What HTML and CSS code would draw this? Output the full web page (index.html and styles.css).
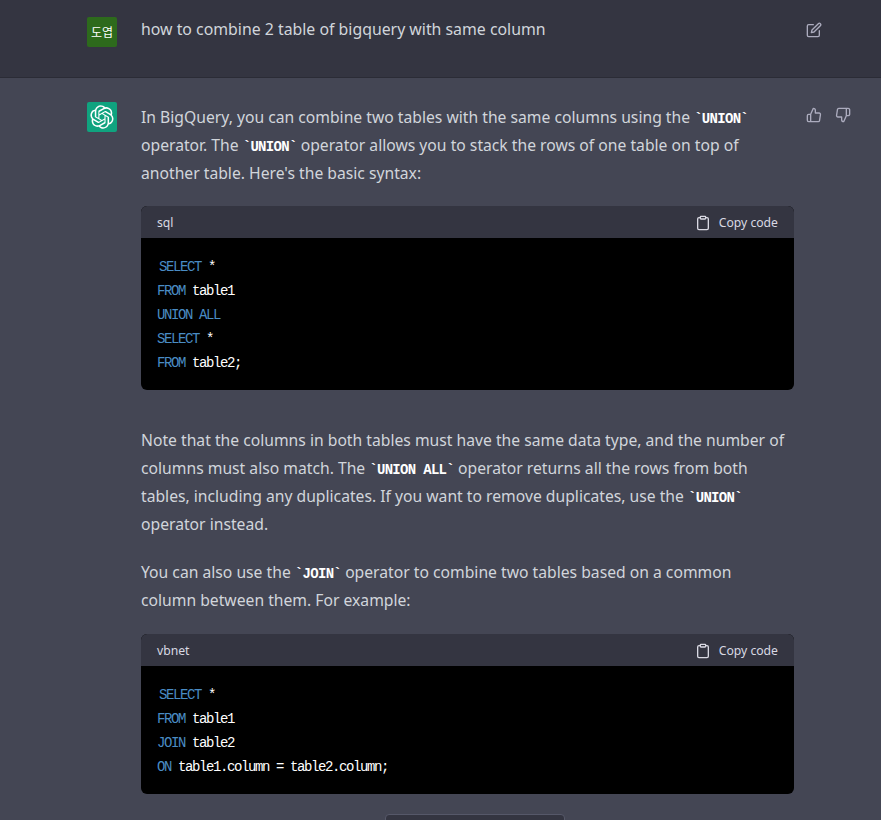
FILE: index.html
```html
<!DOCTYPE html>
<html lang="en">
<head>
    <meta charset="UTF-8">
    <title>ChatGPT</title>
    <link rel="stylesheet" href="styles.css">
</head>
<body>
    <div class="chat">
        <div class="row row-user">
            <div class="avatar avatar-user">도엽</div>
            <div class="message message-user">how to combine 2 table of bigquery with same column</div>
            <div class="actions">
                <svg class="icon" viewBox="0 0 24 24"><path d="M11 4H4a2 2 0 0 0-2 2v14a2 2 0 0 0 2 2h14a2 2 0 0 0 2-2v-7"/><path d="M18.5 2.5a2.121 2.121 0 0 1 3 3L12 15l-4 1 1-4 9.500-9.500z"/></svg>
            </div>
        </div>
        <div class="row row-bot">
            <div class="avatar avatar-bot">
                <svg viewBox="0 0 41 41"><path d="M37.5324 16.8707C37.9808 15.5241 38.1363 14.0974 37.9886 12.6859C37.8409 11.2744 37.3934 9.91076 36.676 8.68622C35.6126 6.83404 33.9882 5.3676 32.0373 4.4985C30.0864 3.62941 27.9098 3.40259 25.8215 3.85078C24.8796 2.7893 23.7219 1.94125 22.4257 1.36341C21.1295 0.785575 19.7249 0.491269 18.3058 0.500197C16.1708 0.495044 14.0893 1.16803 12.3614 2.42214C10.6335 3.67624 9.34853 5.44666 8.6917 7.47815C7.30085 7.76286 5.98686 8.3414 4.8377 9.17505C3.68854 10.0087 2.73073 11.0782 2.02839 12.312C0.956464 14.1591 0.498905 16.2988 0.721698 18.4228C0.944492 20.5467 1.83612 22.5449 3.268 24.1293C2.81966 25.4759 2.66413 26.9026 2.81182 28.3141C2.95951 29.7256 3.40701 31.0892 4.12437 32.3138C5.18791 34.1659 6.8123 35.6322 8.76321 36.5013C10.7141 37.3704 12.8907 37.5973 14.9789 37.1492C15.9208 38.2107 17.0786 39.0587 18.3747 39.6366C19.6709 40.2144 21.0755 40.5087 22.4946 40.4998C24.6307 40.5054 26.7133 39.8321 28.4418 38.5772C30.1704 37.3223 31.4556 35.5506 32.1119 33.5179C33.5027 33.2332 34.8167 32.6547 35.9659 31.821C37.115 30.9874 38.0728 29.9178 38.7752 28.684C39.8458 26.8371 40.3023 24.6979 40.0789 22.5748C39.8556 20.4517 38.9639 18.4544 37.5324 16.8707ZM22.4978 37.8849C20.7443 37.8874 19.0459 37.2733 17.6994 36.1501C17.7601 36.117 17.8666 36.0586 17.936 36.0161L25.9004 31.4156C26.1003 31.3019 26.2663 31.137 26.3813 30.9378C26.4964 30.7386 26.5563 30.5124 26.5549 30.2825V19.0542L29.9213 20.998C29.9389 21.0068 29.9541 21.0198 29.9656 21.0359C29.977 21.052 29.9842 21.0707 29.9867 21.0902V30.3889C29.9842 32.375 29.1946 34.2791 27.7909 35.6841C26.3872 37.0892 24.4838 37.8806 22.4978 37.8849ZM6.39227 31.0064C5.51397 29.4888 5.19742 27.7107 5.49804 25.9832C5.55718 26.0187 5.66048 26.0818 5.73461 26.1244L13.699 30.7248C13.8975 30.8408 14.1233 30.902 14.3532 30.902C14.583 30.902 14.8088 30.8408 15.0073 30.7248L24.731 25.1103V28.9979C24.7321 29.0177 24.7283 29.0376 24.7199 29.0556C24.7115 29.0736 24.6988 29.0893 24.6829 29.1012L16.6317 33.7497C14.9096 34.7416 12.8643 35.0097 10.9447 34.4954C9.02506 33.9811 7.38785 32.7263 6.39227 31.0064ZM4.29707 13.6194C5.17156 12.0998 6.55279 10.9364 8.19885 10.3327C8.19885 10.4013 8.19491 10.5228 8.19491 10.6071V19.808C8.19351 20.0378 8.25334 20.2638 8.36823 20.4629C8.48312 20.6619 8.64893 20.8267 8.84863 20.9404L18.5723 26.5542L15.206 28.4979C15.1894 28.5089 15.1703 28.5155 15.1505 28.5173C15.1307 28.5191 15.1107 28.516 15.0924 28.5082L7.04046 23.8557C5.32135 22.8601 4.06716 21.2235 3.55289 19.3046C3.03862 17.3858 3.30624 15.3413 4.29707 13.6194ZM31.955 20.0556L22.2312 14.4411L25.5976 12.4981C25.6142 12.4872 25.6333 12.4805 25.6531 12.4787C25.6729 12.4769 25.6928 12.4801 25.7111 12.4879L33.7631 17.1364C34.9967 17.849 36.0017 18.8982 36.6606 20.1613C37.3194 21.4244 37.6047 22.849 37.4832 24.2684C37.3617 25.6878 36.8382 27.0432 35.9743 28.1759C35.1103 29.3086 33.9415 30.1717 32.6047 30.6641C32.6047 30.5947 32.6047 30.4733 32.6047 30.3889V21.188C32.6066 20.9586 32.5474 20.7328 32.4332 20.5338C32.319 20.3348 32.154 20.1698 31.955 20.0556ZM35.3055 15.0128C35.2464 14.9765 35.1431 14.9142 35.069 14.8717L27.1045 10.2712C26.906 10.1554 26.6803 10.0943 26.4504 10.0943C26.2206 10.0943 25.9948 10.1554 25.7963 10.2712L16.0726 15.8858V11.9982C16.0715 11.9783 16.0753 11.9585 16.0837 11.9405C16.0921 11.9225 16.1048 11.9068 16.1207 11.8949L24.1719 7.25025C25.4053 6.53903 26.8158 6.19376 28.2383 6.25482C29.6608 6.31589 31.0364 6.78077 32.2044 7.59508C33.3723 8.40939 34.2842 9.53945 34.8334 10.8531C35.3826 12.1667 35.5464 13.6095 35.3055 15.0128ZM14.2424 21.9419L10.8752 19.9981C10.8576 19.9893 10.8423 19.9763 10.8309 19.9602C10.8195 19.9441 10.8122 19.9254 10.8098 19.9058V10.6071C10.8107 9.18295 11.2173 7.78848 11.9819 6.58696C12.7466 5.38544 13.8377 4.42659 15.1275 3.82264C16.4173 3.21869 17.8524 2.99464 19.2649 3.1767C20.6775 3.35876 22.0089 3.93941 23.1034 4.85067C23.0427 4.88379 22.937 4.94215 22.8668 4.98473L14.9024 9.58517C14.7025 9.69878 14.5366 9.86356 14.4215 10.0626C14.3065 10.2616 14.2466 10.4877 14.2479 10.7175L14.2424 21.9419ZM16.071 17.9991L20.4018 15.4978L24.7325 17.9975V22.9985L20.4018 25.4983L16.071 22.9985V17.9991Z"/></svg>
            </div>
            <div class="message message-bot">
                <p class="intro">In BigQuery, you can combine two tables with the same columns using the <code>`UNION`</code> operator. The <code>`UNION`</code> operator allows you to stack the rows of one table on top of another table. Here's the basic syntax:</p>
                <div class="code-block">
                    <div class="code-head">
                        <span>sql</span>
                        <span class="copy">
                            <svg class="icon" viewBox="0 0 24 24"><path d="M16 4h2a2 2 0 0 1 2 2v14a2 2 0 0 1-2 2H6a2 2 0 0 1-2-2V6a2 2 0 0 1 2-2h2"/><rect x="8" y="2" width="8" height="4" rx="1"/></svg>
                            Copy code
                        </span>
                    </div>
<pre class="code-body"><span class="first"></span><span class="kw">SELECT</span> *
<span class="kw">FROM</span> table1
<span class="kw">UNION ALL</span>
<span class="kw">SELECT</span> *
<span class="kw">FROM</span> table2;</pre>
                </div>
                <p class="after-code">Note that the columns in both tables must have the same data type, and the number of columns must also match. The <code>`UNION ALL`</code> operator returns all the rows from both tables, including any duplicates. If you want to remove duplicates, use the <code>`UNION`</code> operator instead.</p>
                <p>You can also use the <code>`JOIN`</code> operator to combine two tables based on a common<br>column between them. For example:</p>
                <div class="code-block">
                    <div class="code-head">
                        <span>vbnet</span>
                        <span class="copy">
                            <svg class="icon" viewBox="0 0 24 24"><path d="M16 4h2a2 2 0 0 1 2 2v14a2 2 0 0 1-2 2H6a2 2 0 0 1-2-2V6a2 2 0 0 1 2-2h2"/><rect x="8" y="2" width="8" height="4" rx="1"/></svg>
                            Copy code
                        </span>
                    </div>
<pre class="code-body"><span class="first"></span><span class="kw">SELECT</span> *
<span class="kw">FROM</span> table1
<span class="kw">JOIN</span> table2
<span class="kw">ON</span> table1.column = table2.column;</pre>
                </div>
            </div>
            <div class="actions">
                <svg class="icon" viewBox="0 0 24 24"><path d="M14 9V5a3 3 0 0 0-3-3l-4 9v11h11.280a2 2 0 0 0 2-1.700l1.380-9a2 2 0 0 0-2-2.300zM7 22H4a2 2 0 0 1-2-2v-7a2 2 0 0 1 2-2h3"/></svg>
                <svg class="icon" viewBox="0 0 24 24"><path d="M10 15v4a3 3 0 0 0 3 3l4-9V2H5.720a2 2 0 0 0-2 1.700l-1.380 9a2 2 0 0 0 2 2.300zm7-13h2.670A2.310 2.310 0 0 1 22 4v7a2.310 2.310 0 0 1-2.330 2H17"/></svg>
            </div>
        </div>
    </div>
    <div class="regenerate"></div>
</body>
</html>
```

FILE: styles.css
```css
html, body {
    height: 100%;
}
body {
    margin: 0;
    overflow: hidden;
    background-color: #444654;
    color: #d1d5db;
    font-family: "Noto Sans", sans-serif;
    font-size: 15.85px;
    line-height: 28px;
}
.row {
    display: flex;
    padding-left: 87px;
}
.row-user {
    height: 60px;
    padding-top: 17px;
    background-color: #343541;
    border-bottom: 1px solid #2b2c36;
}
.row-bot {
    padding-top: 24px;
}
.avatar {
    flex: none;
    display: flex;
    align-items: center;
    justify-content: center;
    width: 30px;
    height: 30px;
    border-radius: 2px;
}
.avatar-user {
    background-color: #2d6a1c;
    color: white;
    font-family: "Noto Sans CJK KR", sans-serif;
    font-size: 12px;
}
.avatar-bot {
    background-color: #10a37f;
}
.avatar-bot svg {
    width: 24px;
    height: 24px;
    fill: white;
}
.message {
    flex: none;
    width: 653px;
    margin-left: 24px;
}
.message-user {
    margin-top: -2px;
}
.message-bot {
    font-size: 15.7px;
}
.message p {
    margin: 0 0 20px;
}
.message p.intro {
    margin-bottom: 19px;
    padding-top: 1px;
}
.message p.after-code {
    margin-top: 36px;
}
.message code {
    color: white;
    font-family: "Liberation Mono", monospace;
    font-size: 14px;
    font-weight: bold;
    line-height: 1;
    letter-spacing: -0.7px;
}
.actions {
    display: flex;
    gap: 13px;
    margin-left: 12px;
    padding-top: 5px;
}
.icon {
    flex: none;
    width: 16px;
    height: 16px;
    fill: none;
    stroke: #acacbe;
    stroke-width: 2;
    stroke-linecap: round;
    stroke-linejoin: round;
}
.code-block {
    background-color: black;
    border-radius: 6px;
    overflow: hidden;
}
.code-head {
    display: flex;
    align-items: center;
    justify-content: space-between;
    box-sizing: border-box;
    height: 32px;
    padding: 1px 16px 0;
    background-color: #343541;
    font-size: 12.2px;
    color: #d9d9e3;
}
.copy {
    display: flex;
    align-items: center;
    gap: 8px;
}
.copy .icon {
    stroke: #d9d9e3;
}
.code-body {
    margin: 0;
    padding: 17px 16px 15px;
    color: white;
    font-family: "Liberation Mono", monospace;
    font-size: 14px;
    line-height: 24px;
    letter-spacing: -1.4px;
}
.first {
    margin-left: 2px;
}
.kw {
    color: #4a8cc4;
}
.regenerate {
    position: absolute;
    left: 385px;
    top: 814px;
    width: 178px;
    height: 40px;
    background-color: #343541;
    border: 1px solid #565869;
    border-radius: 4px;
}
```
